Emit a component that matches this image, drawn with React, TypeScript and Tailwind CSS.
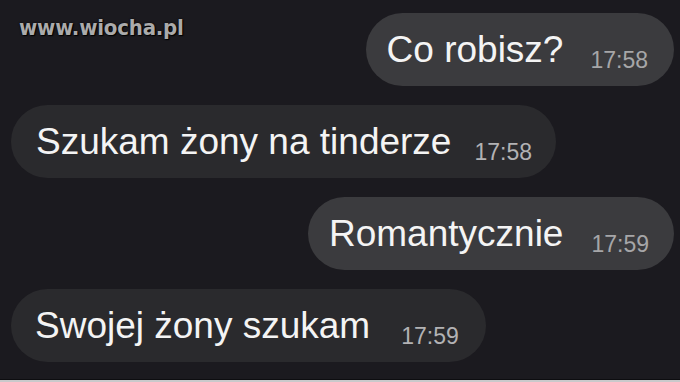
type Msg = {
  text: string;
  time: string;
  mine: boolean;
  pad: string;
};

const messages: Msg[] = [
  { text: "Co robisz?", time: "17:58", mine: true, pad: "pl-[21px] pr-[26px] gap-[27px]" },
  { text: "Szukam żony na tinderze", time: "17:58", mine: false, pad: "pl-[25px] pr-[24px] gap-[23px]" },
  { text: "Romantycznie", time: "17:59", mine: true, pad: "pl-[21px] pr-[25px] gap-[28px]" },
  { text: "Swojej żony szukam", time: "17:59", mine: false, pad: "pl-[24px] pr-[27px] gap-[31px]" },
];

function Bubble({ msg }: { msg: Msg }) {
  return (
    <div className={msg.mine ? "flex justify-end pr-[6px]" : "flex justify-start pl-[11px]"}>
      <div
        className={
          "flex items-center h-[73px] rounded-full " +
          msg.pad +
          (msg.mine ? " bg-[#3b3b3e]" : " bg-[#2a2a2d]")
        }
      >
        <span className="text-[37px] leading-none text-[#f4f4f4]">{msg.text}</span>
        <span
          className={
            "self-end mb-[14px] text-[23px] leading-none " +
            (msg.mine ? "text-[#a6a6a8]" : "text-[#b2b2b4]")
          }
        >
          {msg.time}
        </span>
      </div>
    </div>
  );
}

export default function App() {
  return (
    <div className="relative w-[680px] h-[382px] overflow-hidden bg-[#1b1a1f] font-['Liberation_Sans',Arial,sans-serif]">
      <div className="flex flex-col gap-[19px] pt-[13px]">
        {messages.map((m, i) => (
          <Bubble key={i} msg={m} />
        ))}
      </div>

      {/* watermark */}
      <div className="absolute left-[19px] top-[11px] font-['DejaVu_Sans_Condensed','DejaVu_Sans',sans-serif] font-bold text-[22px] tracking-[-0.2px] text-[#ababab] [text-shadow:0_0_2px_#000,1px_1px_1px_#000]">
        www.wiocha.pl
      </div>

      {/* bottom edge */}
      <div className="absolute left-0 right-0 bottom-0 h-[3px] border-t border-[#0d0d10] bg-[#c9c9cb]" />
    </div>
  );
}
